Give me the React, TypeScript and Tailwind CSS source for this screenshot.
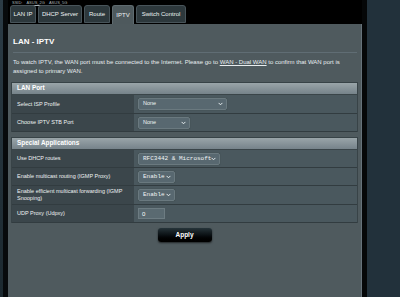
import React from "react";

const Chev = () => (
  <svg width="5" height="4" viewBox="0 0 5 4" className="shrink-0">
    <polyline points="0.6,0.9 2.5,2.8 4.4,0.9" fill="none" stroke="#e6ecee" strokeWidth="1" />
  </svg>
);

function Select({ w, text, mono }: { w: string; text: string; mono?: boolean }) {
  return (
    <div
      className={`${w} h-[12px] flex items-center justify-between pl-[4px] pr-[3px] rounded-[2px] border border-[#6a797f] bg-[#586870] text-[#f1f4f5] shadow-[0_0_1px_#33403f]`}
    >
      <span
        className={
          mono
            ? "text-[6px] leading-none font-['Liberation_Mono',monospace] whitespace-nowrap"
            : "text-[5.5px] leading-none font-['Liberation_Sans',Arial,sans-serif] whitespace-nowrap"
        }
      >
        {text}
      </span>
      <Chev />
    </div>
  );
}

function Row({ label, h, children }: { label: React.ReactNode; h: string; children: React.ReactNode }) {
  return (
    <div className={`flex ${h} border-b border-[#323c40]`}>
      <div className="w-[122px] shrink-0 bg-[#3b464b] pl-[5px] pr-[8px] flex items-center text-[5.5px] leading-[7px] text-[#eef2f3]">
        <span>{label}</span>
      </div>
      <div className="flex-1 bg-[#4a585e] pl-[4px] flex items-center">{children}</div>
    </div>
  );
}

function Header({ title }: { title: string }) {
  return (
    <div className="h-[12px] bg-gradient-to-b from-[#9aa5a9] to-[#76838a] pl-[5px] flex items-center border-b border-[#3a4549]">
      <span className="text-[6.4px] font-bold text-white leading-none">{title}</span>
    </div>
  );
}

function Tab({ w, label, active }: { w: string; label: string; active?: boolean }) {
  return (
    <div
      className={
        active
          ? `${w} h-[19px] rounded-t-[3px] bg-[#4e595d] border border-b-0 border-[#5f6b70] flex items-center justify-center`
          : `${w} h-[18px] mb-[1px] rounded-t-[3px] bg-[#2d383c] border border-[#48545a] flex items-center justify-center`
      }
    >
      <span className="text-[6px] leading-none text-[#eef2f3] whitespace-nowrap">{label}</span>
    </div>
  );
}

export default function App() {
  return (
    <div className="w-[400px] h-[297px] flex bg-black overflow-hidden font-['Liberation_Sans',Arial,sans-serif]">
      <div className="w-[8px] flex">
        <div className="w-[3px] bg-gradient-to-b from-[#2c3c46] to-[#1c2930]" />
        <div className="w-[5px] bg-[#070a0c]" />
      </div>

      <div className="w-[354px] flex flex-col">
        <div className="h-[5px] flex items-start pl-[4px] gap-[4px] text-[4px] leading-[5px] text-[#aab4b8] whitespace-nowrap">
          <span>SSID:</span>
          <span className="underline">ASUS_2G</span>
          <span className="underline">ASUS_5G</span>
        </div>
        <div className="h-[19px] flex items-end gap-[2px] pl-[2px]">
          <Tab w="w-[26px]" label="LAN IP" />
          <Tab w="w-[44px]" label="DHCP Server" />
          <Tab w="w-[26px]" label="Route" />
          <Tab w="w-[22px]" label="IPTV" active />
          <Tab w="w-[50px]" label="Switch Control" />
        </div>

        <div className="flex-1 bg-[#4f5a5e] border-r border-[#66727a] flex flex-col">
          <div className="pt-[13px] pl-[5px] text-[8px] leading-[10px] font-bold text-white">LAN - IPTV</div>
          <div className="mt-[5px] ml-[5px] mr-[4px] h-[1px] bg-[#606d74]" />
          <div className="mt-[5px] ml-[5px] text-[6px] leading-[9px] text-[#e8edef] whitespace-nowrap">
            To watch IPTV, the WAN port must be connected to the Internet. Please go to{" "}
            <span className="underline">WAN - Dual WAN</span> to confirm that WAN port is
            <br />
            assigned to primary WAN.
          </div>

          <div className="mt-[6px] mx-[3px] border border-[#384347] border-b-0">
            <Header title="LAN Port" />
            <Row label="Select ISP Profile" h="h-[19px]">
              <Select w="w-[89px]" text="None" />
            </Row>
            <Row label="Choose IPTV STB Port" h="h-[18px]">
              <Select w="w-[52px]" text="None" />
            </Row>
          </div>

          <div className="mt-[5px] mx-[3px] border border-[#384347] border-b-0">
            <Header title="Special Applications" />
            <Row label="Use DHCP routes" h="h-[18px]">
              <Select w="w-[82px]" text="RFC3442 & Microsoft" mono />
            </Row>
            <Row label="Enable multicast routing (IGMP Proxy)" h="h-[18px]">
              <Select w="w-[37px]" text="Enable" mono />
            </Row>
            <Row label="Enable efficient multicast forwarding (IGMP Snooping)" h="h-[19px]">
              <Select w="w-[37px]" text="Enable" mono />
            </Row>
            <Row label="UDP Proxy (Udpxy)" h="h-[18px]">
              <div className="w-[27px] h-[11px] bg-[#5a6a71] border border-[#6d7c82] flex items-center pl-[3px] text-[6px] leading-none text-white">
                0
              </div>
            </Row>
          </div>

          <div className="mt-[5px] flex justify-center">
            <div className="w-[54px] h-[14px] rounded-[3px] bg-gradient-to-b from-[#26343a] via-[#0b1114] to-[#000000] shadow-[0_1px_2px_rgba(0,0,0,0.6)] flex items-center justify-center">
              <span className="text-[6.5px] font-bold text-white leading-none">Apply</span>
            </div>
          </div>
        </div>
      </div>

      <div className="w-[5px] bg-[#050708]" />
      <div className="flex-1 bg-[#22313b]" />
    </div>
  );
}
